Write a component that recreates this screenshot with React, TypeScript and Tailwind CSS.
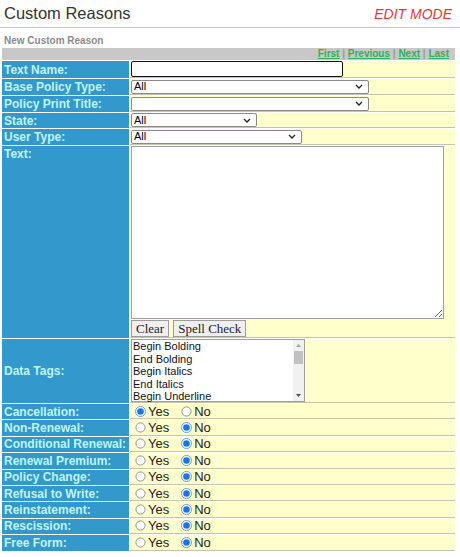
import React from "react";

// Formulario de razones personalizadas (modo edición)

const font = { fontFamily: '"Liberation Sans", Arial, sans-serif' };

function Chevron() {
  return (
    <svg width="8" height="5" viewBox="0 0 8 5" className="shrink-0">
      <path d="M1 1l3 3 3-3" fill="none" stroke="#222" strokeWidth="1.3" />
    </svg>
  );
}

function FakeSelect({ width, value = "" }: { width: number; value?: string }) {
  return (
    <div
      className="flex h-[14px] items-center justify-between rounded-[2px] border border-[#8a8a8a] bg-white pl-[2px] pr-[5px] text-[11px] leading-none text-black"
      style={{ width }}
    >
      <span>{value}</span>
      <Chevron />
    </div>
  );
}

function Radio({ on }: { on: boolean }) {
  return (
    <svg width="11" height="11" viewBox="0 0 11 11" className="shrink-0">
      {on ? (
        <>
          <circle cx="5.5" cy="5.5" r="5" fill="#fff" stroke="#5b9cf0" />
          <circle cx="5.5" cy="5.5" r="3.3" fill="#1a73e8" />
        </>
      ) : (
        <circle cx="5.5" cy="5.5" r="4.6" fill="#fff" stroke="#888" strokeWidth="0.9" />
      )}
    </svg>
  );
}

function YesNo({ yes }: { yes: boolean }) {
  return (
    <div className="flex items-center text-[13px] leading-none text-[#222]">
      <div className="flex items-center gap-[2px] pl-[4px]">
        <Radio on={yes} />
        <span>Yes</span>
      </div>
      <div className="ml-[12px] flex items-center gap-[2px]">
        <Radio on={!yes} />
        <span>No</span>
      </div>
    </div>
  );
}

const flags: [string, boolean][] = [
  ["Cancellation:", true],
  ["Non-Renewal:", false],
  ["Conditional Renewal:", false],
  ["Renewal Premium:", false],
  ["Policy Change:", false],
  ["Refusal to Write:", false],
  ["Reinstatement:", false],
  ["Rescission:", false],
  ["Free Form:", false],
];

const tags = ["Begin Bolding", "End Bolding", "Begin Italics", "End Italics", "Begin Underline"];

function Label({ children, middle }: { children: React.ReactNode; middle?: boolean }) {
  return (
    <td
      className={`whitespace-nowrap bg-[#3399cc] px-[2px] text-[12px] font-bold leading-none text-[#bff5f5] ${
        middle ? "align-middle" : "align-top pt-[2px]"
      }`}
    >
      {children}
    </td>
  );
}

function Val({ children }: { children?: React.ReactNode }) {
  return (
    <td className="border-b border-[#c4c4aa] bg-[#ffffcc] p-0 pl-[1px] align-middle">{children}</td>
  );
}

export default function App() {
  return (
    <div className="h-[557px] w-[460px] overflow-hidden bg-white" style={font}>
      <div className="flex h-[27px] items-center justify-between px-[4px]">
        <h1 className="text-[16.5px] leading-none text-[#333]">Custom Reasons</h1>
        <span className="pr-[4px] text-[14px] italic leading-none text-[#e0383c]">EDIT MODE</span>
      </div>
      <div className="h-px bg-[#c4c4c4]" />
      <div className="pl-[4px] pt-[7px] text-[10px] font-bold leading-[12px] text-[#8a8a8a]">
        New Custom Reason
      </div>

      <table className="ml-[1px] w-[455px] table-fixed border-separate border-spacing-[1px] bg-white">
        <colgroup>
          <col className="w-[127px]" />
          <col />
        </colgroup>
        <tbody>
          <tr>
            <td
              colSpan={2}
              className="h-[12px] bg-[#c8c8c8] pr-[6px] text-right text-[10px] font-bold leading-none"
            >
              <a className="text-[#2bb35a] underline">First</a>
              <span className="text-[#9a9a9a]"> | </span>
              <a className="text-[#2bb35a] underline">Previous</a>
              <span className="text-[#9a9a9a]"> | </span>
              <a className="text-[#2bb35a] underline">Next</a>
              <span className="text-[#9a9a9a]"> | </span>
              <a className="text-[#2bb35a] underline">Last</a>
            </td>
          </tr>
          <tr className="h-[17px]">
            <Label middle>Text Name:</Label>
            <Val>
              <div className="h-[16px] w-[212px] rounded-[2px] border-[1.5px] border-[#111] bg-white" />
            </Val>
          </tr>
          <tr className="h-[16px]">
            <Label middle>Base Policy Type:</Label>
            <Val>
              <FakeSelect width={238} value="All" />
            </Val>
          </tr>
          <tr className="h-[16px]">
            <Label middle>Policy Print Title:</Label>
            <Val>
              <FakeSelect width={238} />
            </Val>
          </tr>
          <tr className="h-[15px]">
            <Label middle>State:</Label>
            <Val>
              <FakeSelect width={126} value="All" />
            </Val>
          </tr>
          <tr className="h-[16px]">
            <Label middle>User Type:</Label>
            <Val>
              <FakeSelect width={171} value="All" />
            </Val>
          </tr>
          <tr className="h-[192px]">
            <Label>Text:</Label>
            <Val>
              <div className="flex flex-col">
                <textarea className="block h-[173px] w-[313px] resize border border-[#a0a0a0] bg-white outline-none" />
                <div className="mt-[1px] flex gap-[4px]">
                  <button
                    className="h-[17px] border border-[#9c9c9c] bg-[#efefef] px-[4px] text-[13px] leading-none text-[#222]"
                    style={{ fontFamily: '"Liberation Serif", "Times New Roman", serif' }}
                  >
                    Clear
                  </button>
                  <button
                    className="h-[17px] border border-[#9c9c9c] bg-[#efefef] px-[4px] text-[13px] leading-none text-[#222]"
                    style={{ fontFamily: '"Liberation Serif", "Times New Roman", serif' }}
                  >
                    Spell Check
                  </button>
                </div>
              </div>
            </Val>
          </tr>
          <tr className="h-[64px]">
            <Label middle>Data Tags:</Label>
            <Val>
              <div className="flex h-[63px] w-[174px] border border-[#a0a0a0] bg-white">
                <div className="flex-1 pl-[1px] text-[11px] leading-[12.5px] text-[#111]">
                  {tags.map((t) => (
                    <div key={t}>{t}</div>
                  ))}
                </div>
                <div className="flex w-[11px] flex-col items-center bg-[#f1f1f1]">
                  <svg width="7" height="7" viewBox="0 0 7 7" className="mt-[2px]">
                    <path d="M1 5l2.5-3 2.5 3z" fill="#a3a3a3" />
                  </svg>
                  <div className="mt-[2px] h-[13px] w-[9px] bg-[#c1c1c1]" />
                  <div className="flex-1" />
                  <svg width="7" height="7" viewBox="0 0 7 7" className="mb-[2px]">
                    <path d="M1 2l2.5 3 2.5-3z" fill="#505050" />
                  </svg>
                </div>
              </div>
            </Val>
          </tr>
          {flags.map(([label, yes]) => (
            <tr key={label} className="h-[15.4px]">
              <Label middle>{label}</Label>
              <Val>
                <YesNo yes={yes} />
              </Val>
            </tr>
          ))}
        </tbody>
      </table>
    </div>
  );
}
